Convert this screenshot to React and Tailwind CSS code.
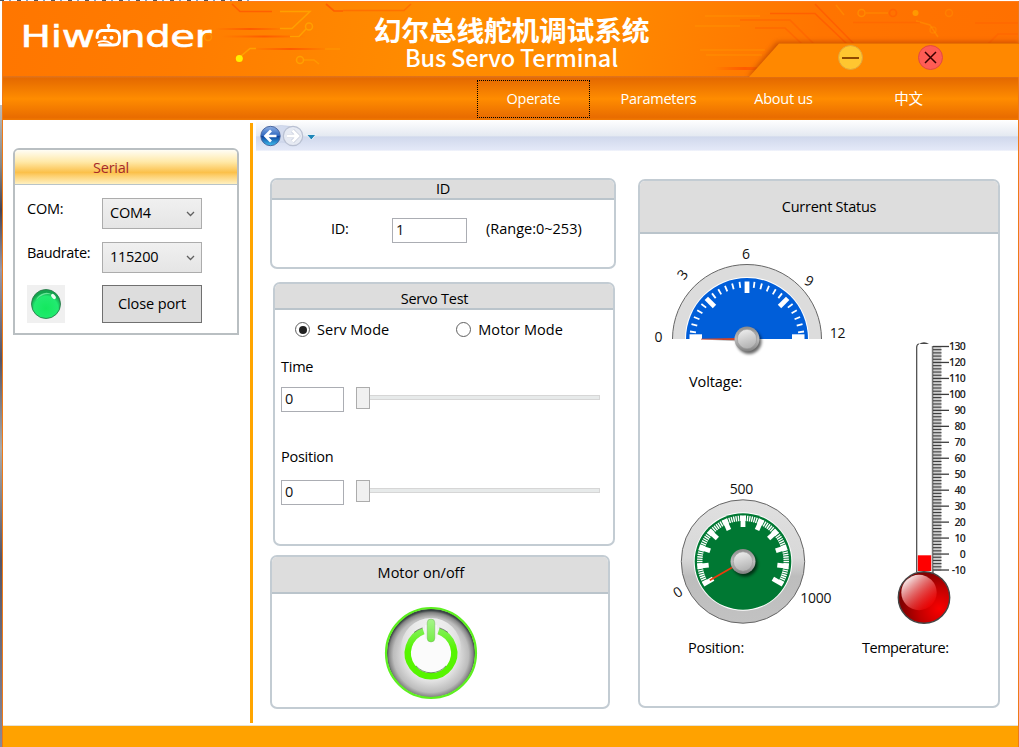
import React from "react";

const polar = (cx, cy, r, deg) => {
  const a = (deg * Math.PI) / 180;
  return [cx + r * Math.cos(a), cy - r * Math.sin(a)];
};

function Tick({ cx, cy, r1, r2, deg, w }) {
  const [x1, y1] = polar(cx, cy, r1, deg);
  const [x2, y2] = polar(cx, cy, r2, deg);
  return <line x1={x1} y1={y1} x2={x2} y2={y2} stroke="#fff" strokeWidth={w} />;
}

function Knob({ cx, cy }) {
  return (
    <g>
      <circle cx={cx + 2} cy={cy + 2.5} r="12.5" fill="#000" opacity="0.6" filter="url(#soft)" />
      <circle cx={cx} cy={cy} r="12.5" fill="url(#knobRim)" />
      <circle cx={cx} cy={cy} r="9.7" fill="url(#knobFace)" stroke="#999" strokeWidth="0.6" />
    </g>
  );
}

function Defs() {
  return (
    <defs>
      <filter id="soft" x="-50%" y="-50%" width="200%" height="200%">
        <feGaussianBlur stdDeviation="1.7" />
      </filter>
      <linearGradient id="knobRim" x1="0" y1="0" x2="0" y2="1">
        <stop offset="0" stopColor="#8a8a8a" />
        <stop offset="0.5" stopColor="#bdbdbd" />
        <stop offset="1" stopColor="#808080" />
      </linearGradient>
      <linearGradient id="knobFace" x1="0" y1="0" x2="0.3" y2="1">
        <stop offset="0" stopColor="#f2f2f2" />
        <stop offset="1" stopColor="#b5b5b5" />
      </linearGradient>
    </defs>
  );
}

function VoltageGauge() {
  const ticks = [];
  for (let i = 1; i < 24; i++) {
    const major = i % 6 === 0;
    ticks.push(<Tick key={i} cx={747} cy={339} r1={major ? 46 : 51.5} r2={57.5} deg={i * 7.5} w={major ? 4.8 : 1.8} />);
  }
  return (
    <svg className="block" width="210" height="120" viewBox="650 243 210 120">
      <Defs />
      <path d="M672.5 339A74.5 74.5 0 0 1 821.5 339Z" fill="#dcdcdc" />
      <path d="M672.5 339A74.5 74.5 0 0 1 821.5 339" fill="none" stroke="#666" strokeWidth="1" />
      <path d="M685 339A62 62 0 0 1 809 339Z" fill="#fff" />
      <path d="M686 339A61 61 0 0 1 808 339Z" fill="#005ed9" />
      {ticks}
      <rect x="689.5" y="334.3" width="12.5" height="4.7" fill="#fff" />
      <rect x="792" y="334.3" width="12.5" height="4.7" fill="#fff" />
      <path d="M701 338.8L736 338V340.2L701 339.4Z" fill="#cf4426" />
      <path d="M703 339.6L736 340.2V341.2Z" fill="#777" opacity="0.5" />
      <Knob cx={747} cy={339} />
      <g className="font-['Open_Sans',sans-serif] text-[14px]" fill="#111" textAnchor="middle">
        <text x="658.3" y="341.7">0</text>
        <text x="0" y="5" transform="translate(682.5 274.5) rotate(-52)">3</text>
        <text x="745.9" y="258.7">6</text>
        <text x="0" y="5" transform="translate(809 281) rotate(28)">9</text>
        <text x="837.6" y="337.7">12</text>
      </g>
    </svg>
  );
}

function PositionGauge() {
  const cx = 743;
  const cy = 561.5;
  const ticks = [];
  for (let i = 0; i <= 80; i++) {
    const major = i % 8 === 0;
    ticks.push(<Tick key={i} cx={cx} cy={cy} r1={major ? 34.5 : 40.5} r2={46} deg={210 - i * 3} w={major ? 4.8 : 1.4} />);
  }
  return (
    <svg className="block" width="180" height="152" viewBox="665 478 180 152">
      <defs>
        <linearGradient id="bezel" x1="0" y1="0" x2="0" y2="1">
          <stop offset="0" stopColor="#e0e0e0" />
          <stop offset="0.47" stopColor="#d8d8d8" />
          <stop offset="0.62" stopColor="#bdbdbd" />
          <stop offset="1" stopColor="#c2c2c2" />
        </linearGradient>
      </defs>
      <circle cx={cx} cy={cy} r="61.7" fill="url(#bezel)" stroke="#666" strokeWidth="1" />
      <circle cx={cx} cy={cy} r="49.3" fill="#fff" />
      <circle cx={cx} cy={cy} r="48.3" fill="#007833" />
      {ticks}
      <path d="M709.8 580.3L733 567" stroke="#ea3c0c" strokeWidth="1.7" />
      <Knob cx={cx} cy={561.5} />
      <g className="font-['Open_Sans',sans-serif] text-[14px]" fill="#111" textAnchor="middle">
        <text x="741.5" y="493.7">500</text>
        <text x="0" y="5" transform="translate(677.7 592.3) rotate(-32)">0</text>
        <text x="815.8" y="602.7">1000</text>
      </g>
    </svg>
  );
}

function Thermometer() {
  const marks = [];
  for (let i = 0; i <= 70; i++) {
    const major = i % 5 === 0;
    const y = 346.5 + i * 3.193;
    marks.push(
      <line key={i} x1="933" x2={major ? 949 : 941.5} y1={y} y2={y} stroke="#3c3c3c" strokeWidth={major ? 1.3 : 1.1} />
    );
    if (major) {
      marks.push(
        <text key={"t" + i} x="965" y={y + 3.7} textAnchor="end">
          {130 - i * 2}
        </text>
      );
    }
  }
  return (
    <svg className="block" width="90" height="290" viewBox="890 338 90 290">
      <defs>
        <radialGradient id="bulb" cx="0.8" cy="0.72" r="0.75">
          <stop offset="0" stopColor="#fa0000" />
          <stop offset="0.55" stopColor="#c00000" />
          <stop offset="1" stopColor="#800000" />
        </radialGradient>
        <linearGradient id="shine" x1="0.15" y1="0.1" x2="0.85" y2="0.9">
          <stop offset="0" stopColor="#fff" stopOpacity="0.95" />
          <stop offset="1" stopColor="#f00" stopOpacity="0.35" />
        </linearGradient>
      </defs>
      <path d="M919 344Q924 340.500 929 344Z" fill="#444" />
      <path d="M916.700 572V347Q917 344 919 344" fill="none" stroke="#444" strokeWidth="1.200" />
      <path d="M932.800 346V573" stroke="#777" strokeWidth="2" />
      <rect x="933" y="346" width="8.300" height="225" fill="#b8b8b8" opacity="0.700" />
      <rect x="917.800" y="555.300" width="13.400" height="15.700" fill="#f00" />
      <g className="font-['Open_Sans',sans-serif] text-[10.5px] font-semibold tracking-[-0.7px]" fill="#222">{marks}</g>
      <circle cx="924" cy="597.500" r="25.700" fill="url(#bulb)" stroke="#444" strokeWidth="1.400" />
      <circle cx="919" cy="592.500" r="17.700" fill="url(#shine)" />
    </svg>
  );
}

function PowerButton() {
  return (
    <svg className="block" width="94" height="94" viewBox="-47 -47 94 94">
      <defs>
        <radialGradient id="disc" cx="0.5" cy="0.52" r="0.5">
          <stop offset="0" stopColor="#fff" />
          <stop offset="0.58" stopColor="#e4e4e4" />
          <stop offset="0.85" stopColor="#bcbcbc" />
          <stop offset="0.95" stopColor="#858585" />
          <stop offset="1" stopColor="#3c4446" />
        </radialGradient>
        <linearGradient id="bar" x1="0" y1="0" x2="0" y2="1">
          <stop offset="0" stopColor="#a8f58c" />
          <stop offset="1" stopColor="#74ee45" />
        </linearGradient>
        <linearGradient id="dome" x1="0" y1="0" x2="0" y2="1">
          <stop offset="0" stopColor="#fff" stopOpacity="0.75" />
          <stop offset="0.6" stopColor="#fff" stopOpacity="0" />
        </linearGradient>
        <linearGradient id="ring" x1="0" y1="0" x2="0" y2="1">
          <stop offset="0" stopColor="#7cf04e" />
          <stop offset="0.4" stopColor="#56f500" />
        </linearGradient>
      </defs>
      <circle r="44.3" fill="url(#disc)" />
      <circle r="45" fill="none" stroke="#5df01f" strokeWidth="2.2" />
      <circle cy="-5" r="30" fill="url(#dome)" />
      <circle r="20.5" fill="#fbfbfb" />
      <path d="M7.500 -21.900A23.200 23.200 0 1 1 -7.500 -21.900" fill="none" stroke="url(#ring)" strokeWidth="6.400" />
      <path d="M-15 12.900A19.800 19.800 0 0 0 15 12.900" fill="none" stroke="#3f6c35" strokeWidth="0.700" />
      <path d="M8.500 -25.100A26.500 26.500 0 0 1 17 -20.500M-8.500 -25.100A26.500 26.500 0 0 0 -17 -20.500" fill="none" stroke="#444" strokeWidth="0.600" />
      <path d="M0 -28V-14.500" stroke="#f6f6f6" strokeWidth="12" />
      <rect x="-3.800" y="-34" width="7.600" height="23" rx="3.800" fill="url(#bar)" stroke="#67a650" strokeWidth="0.400" />
    </svg>
  );
}

function Logo() {
  return (
    <svg className="block" width="210" height="46" viewBox="13 13 210 46">
      <g fill="#fff" stroke="#fff" strokeWidth="0.6" className="font-['DejaVu_Sans',sans-serif] text-[31px]">
        <text x="20.500" y="46.700" textLength="74" lengthAdjust="spacingAndGlyphs">Hiw</text>
        <text x="120" y="46.700" textLength="91" lengthAdjust="spacingAndGlyphs">nder</text>
      </g>
      <g fill="none" stroke="#fff" strokeWidth="3" strokeLinecap="round">
        <path d="M102 30.500H113Q119.500 30.700 119.500 36.500V39Q119.500 45 113.500 45H99.500" />
        <path d="M102 30.500Q97 31 97 37.500" />
        <path d="M98 42.300Q105 39.500 111 43.500" strokeWidth="1.600" />
        <path d="M108.500 30V26" strokeWidth="1.800" />
      </g>
      <circle cx="108.500" cy="25.800" r="2" fill="#fff" />
      <circle cx="104.800" cy="37.800" r="2" fill="#fff" />
      <circle cx="111.500" cy="37.800" r="2" fill="#fff" />
    </svg>
  );
}

function BannerArt() {
  return (
    <svg className="absolute inset-0" width="1016" height="75" viewBox="3 1 1016 75">
      <defs>
        <filter id="blurTab" x="-20%" y="-20%" width="140%" height="140%">
          <feGaussianBlur stdDeviation="2.5" />
        </filter>
        <linearGradient id="fadeL" x1="0" x2="1" y1="0" y2="0">
          <stop offset="0" stopColor="#ff5a00" stopOpacity="0" />
          <stop offset="0.5" stopColor="#ff5a00" />
          <stop offset="1" stopColor="#ff5a00" stopOpacity="0" />
        </linearGradient>
      </defs>
      <g fill="url(#fadeL)">
        <rect x="215" y="27" width="70" height="2" />
        <rect x="222" y="34.500" width="84" height="2" />
        <rect x="252" y="47" width="76" height="2" />
        <rect x="715" y="66" width="60" height="3" />
      </g>
      <g fill="none" stroke="#ffa000" strokeWidth="1.500">
        <path d="M280 10.500H310L292 27.500H280M290 35.500H299L306 28M241 55L250 47.500H256" />
        <circle cx="309" cy="25.500" r="3.500" />
        <circle cx="208" cy="36" r="3.500" opacity="0.600" />
        <circle cx="300" cy="59" r="3.500" />
        <path d="M304 59H314L319 63" opacity="0.700" />
        <path d="M325 48H340" opacity="0.500" />
        <path d="M700 49H765M706 54H762M695 25H740M705 15H760" opacity="0.350" />
        <path d="M836 4L844 14M916 20L930 24L938 36" opacity="0.400" />
        <circle cx="861.500" cy="12" r="3.500" opacity="0.500" />
        <path d="M866 12H888" opacity="0.350" />
        <circle cx="949" cy="12" r="3.500" opacity="0.300" />
        <circle cx="933" cy="29" r="3" opacity="0.300" />
      </g>
      <g fill="none" stroke="#ff6000" strokeWidth="1.700">
        <path d="M232 3L240 10.500H272M326 3L334 10H343" />
        <path d="M343 9.500H404L411 3" opacity="0.600" />
        <path d="M770 12.500H815L847 43M815 3L854 43" />
        <path d="M740 19H790L814 43M755 27H785L802 43" opacity="0.600" />
        <path d="M853 21.500H920M975 22H1018M988 43L998 33H1018" opacity="0.500" />
        <circle cx="893" cy="12" r="3.500" opacity="0.700" />
      </g>
      <circle cx="239.300" cy="57.500" r="3.500" fill="#fff000" />
      <circle cx="915.500" cy="12" r="3" fill="#ff9800" />
      <path d="M748 76L777 41H1019V76Z" fill="#a03000" opacity="0.550" filter="url(#blurTab)" />
      <path d="M749 76L779 42.500H1019V76Z" fill="#ff8800" />
      <path d="M779 42.500H1019" stroke="#e87000" strokeWidth="1" />
    </svg>
  );
}

function Banner() {
  return (
    <header className="relative h-[75px] shrink-0 bg-[linear-gradient(100deg,#ff7600_0%,#ff7c00_18%,#ff8c00_42%,#ff8a00_58%,#ff7400_80%,#ff7000_100%)] border-t border-[#ff7a1a]">
      <BannerArt />
      <div className="relative flex h-full">
        <div className="w-[335px] pl-[10px] pt-[11px]">
          <Logo />
        </div>
        <div className="w-[347px] flex flex-col items-center text-white">
          <div className="pt-[11px] text-[27.800px] leading-[32px] font-bold whitespace-nowrap font-['Noto_Sans_CJK_SC',sans-serif]">
            幻尔总线舵机调试系统
          </div>
          <div className="text-[23.500px] leading-[25px] font-medium tracking-[-0.200px] whitespace-nowrap font-['Noto_Sans_CJK_SC',sans-serif]">
            Bus Servo Terminal
          </div>
        </div>
        <div className="flex pl-[153px] pt-[43px] gap-[55px]">
          <button className="w-[25px] h-[25px] rounded-full bg-[#ffc630] border border-[#e2a53a] flex items-center justify-center">
            <span className="w-[17px] h-[2px] bg-[#8e4a00]" />
          </button>
          <button className="w-[25px] h-[25px] rounded-full bg-[#ff5c55] border border-[#e24a40] flex items-center justify-center">
            <svg width="13" height="13" viewBox="0 0 13 13">
              <path d="M1 1L12 12M12 1L1 12" stroke="#3a0000" strokeWidth="1.500" />
            </svg>
          </button>
        </div>
      </div>
    </header>
  );
}

function Nav() {
  const items = ["Operate", "Parameters", "About us", "中文"];
  return (
    <nav className="h-[44px] pt-px shrink-0 pl-[468px] grid grid-cols-[125px_125px_125px_125px] items-center text-white text-[14.500px] tracking-[-0.25px] bg-[linear-gradient(#e07420_0%,#e56a00_6%,#ff8c00_52%,#e96c00_94%,#f07800_100%)]">
      {items.map((t, i) => (
        <div
          key={t}
          className={
            "w-[113px] h-[38px] mx-auto flex items-center justify-center pt-[1px] whitespace-nowrap " +
            (i === 0 ? "border border-dotted border-black" : "")
          }
        >
          {t}
        </div>
      ))}
    </nav>
  );
}

function Select({ value }) {
  return (
    <div className="w-[100px] h-[31px] flex items-center justify-between pl-[7px] pr-[6px] border border-[#acacac] bg-[linear-gradient(#f0f0f0,#e5e5e5)]">
      <span className="-mt-[2px]">{value}</span>
      <svg width="9" height="6" viewBox="0 0 9 6">
        <path d="M1 1L4.500 4.500L8 1" fill="none" stroke="#606060" strokeWidth="1.300" />
      </svg>
    </div>
  );
}

function Sidebar() {
  return (
    <aside className="w-[247px] shrink-0 pl-[10px] pt-[28px]">
      <section className="w-[226px] h-[187px] border-2 border-[#b9bfc2] rounded-t-[6px] overflow-hidden">
        <h2 className="h-[35px] pr-[30px] text-center leading-[35px] text-[#a52a2a] border-b border-[#b9c4c8] bg-[linear-gradient(#fffdf5_0%,#ffe9a8_35%,#fbc04a_66%,#fdd070_76%,#fff0c0_100%)]">
          Serial
        </h2>
        <div className="pl-[12px] pt-[13px] grid grid-cols-[75px_100px] gap-y-[13px]">
          <label className="leading-[22px]">COM:</label>
          <Select value="COM4" />
          <label className="leading-[22px] tracking-[-0.35px] whitespace-nowrap">Baudrate:</label>
          <Select value="115200" />
          <div className="-mt-px w-[38px] h-[38px] bg-[#f0f0f0] flex items-center justify-center">
            <svg width="32" height="32" viewBox="0 0 32 32">
              <defs>
                <radialGradient id="led" cx="0.5" cy="0.65" r="0.55">
                  <stop offset="0" stopColor="#14e85e" />
                  <stop offset="0.75" stopColor="#22ea70" />
                  <stop offset="1" stopColor="#12a34c" />
                </radialGradient>
              </defs>
              <circle cx="16" cy="16" r="14.500" fill="url(#led)" stroke="#2b7a4c" strokeWidth="0.900" />
              <path d="M6 12A11.500 11.500 0 0 1 24 7.500Q18 5 13 7T6 12Z" fill="#8af5b4" opacity="0.700" />
              <ellipse cx="23.500" cy="8.500" rx="1.800" ry="3" transform="rotate(-38 23.500 8.500)" fill="#eafff2" />
            </svg>
          </div>
          <button className="-mt-px w-[100px] h-[38px] pb-px tracking-[-0.100px] border border-[#707070] bg-[#dddddd]">Close port</button>
        </div>
      </section>
    </aside>
  );
}

function Toolbar() {
  return (
    <div className="ml-[3px] h-[31px] flex items-center pl-[4px] pb-px bg-[linear-gradient(#ffffff_0%,#e4e9f1_52%,#d0d8ec_54%,#e4e9f8_97%,#fafbfe_100%)]">
      <svg width="60" height="26" viewBox="0 0 60 26">
        <defs>
          <linearGradient id="back" x1="0" y1="0" x2="0" y2="1">
            <stop offset="0" stopColor="#8fb0e4" />
            <stop offset="0.48" stopColor="#2f68c0" />
            <stop offset="0.52" stopColor="#0e439e" />
            <stop offset="1" stopColor="#3fc0f0" />
          </linearGradient>
        </defs>
        <path d="M8 5Q21 2 35 5V22Q22 18 8 22Z" fill="#d3dbee" stroke="#c0cae0" strokeWidth="0.600" />
        <circle cx="10.500" cy="14" r="9.700" fill="url(#back)" stroke="#3e5d98" strokeWidth="0.900" />
        <circle cx="33" cy="14" r="9.700" fill="#e6eaf3" stroke="#b9c0d2" strokeWidth="1.200" />
        <path d="M16.500 14H6M11 8.500L5.500 14L11 19.500" fill="none" stroke="#fff" strokeWidth="2.700" />
        <path d="M27 14H37.500M32.500 8.500L38 14L32.500 19.500" fill="none" stroke="#c3c9d8" strokeWidth="4" />
        <path d="M27 14H37.500M32.500 8.500L38 14L32.500 19.500" fill="none" stroke="#fff" strokeWidth="2.800" />
        <path d="M46.500 12.500H56L51.300 18Z" fill="#1e86b8" stroke="#fff" strokeWidth="0.800" />
      </svg>
    </div>
  );
}

function Card({ title, className, headClass, children }) {
  return (
    <section className={"border-2 border-[#c3ccd3] rounded-[7px] overflow-hidden bg-white " + className}>
      <h2 className={"bg-[#dddddd] border-b-2 border-[#bac4cb] flex items-center justify-center " + headClass}>{title}</h2>
      {children}
    </section>
  );
}

function Field({ value, className }) {
  return (
    <div className={"h-[25px] border border-[#abadb3] bg-white pl-[3px] leading-[22px] text-[#111] " + className}>{value}</div>
  );
}

function Radio({ label, checked }) {
  return (
    <label className="flex items-center gap-[7px] whitespace-nowrap tracking-[0.050px]">
      <span className="w-[15px] h-[15px] rounded-full border border-[#606060] bg-white flex items-center justify-center">
        {checked && <span className="w-[8px] h-[8px] rounded-full bg-[#212121]" />}
      </span>
      {label}
    </label>
  );
}

function SliderRow({ label, className }) {
  return (
    <div>
      <div className="h-[20px] leading-[20px]">{label}</div>
      <div className={"flex items-start " + className}>
        <Field value="0" className="w-[63px]" />
        <div className="ml-[12px] w-[244px] h-[22px] flex items-center">
          <span className="w-[14px] h-[22px] shrink-0 border border-[#acacac] bg-[#f0f0f0]" />
          <span className="grow h-[5px] border border-l-0 border-[#d6d6d6] bg-[#e7eaea]" />
        </div>
      </div>
    </div>
  );
}

export default function App() {
  return (
    <div className="w-[1019px] h-[747px] overflow-hidden bg-white text-black text-[14.500px] tracking-[-0.25px] font-['Open_Sans','Noto_Sans_CJK_SC',sans-serif] flex flex-col">
      <div className="h-px shrink-0 w-[249px] bg-[repeating-linear-gradient(90deg,#555_0_4px,#fff_4px_9px,#7ea0c0_9px_11px,#fff_11px_17px)]" />
      <div className="flex grow min-h-0">
        <div className="w-[2px] shrink-0 bg-[linear-gradient(#fff_0%,#fff_14%,#bbb_14%,#888_22%,#445_28%,#99a_36%,#556_48%,#aaa_60%,#556_75%,#889_100%)]" />
        <div className="w-[1017px] flex flex-col border-l border-r border-[#ee7a18]">
          <Banner />
          <Nav />
          <div className="h-[606px] shrink-0 flex border-b border-[#e6e2d4]">
            <Sidebar />
            <div className="w-[3px] h-[600px] mt-[3px] shrink-0 bg-[#ffa500]" />
            <main className="grow">
              <Toolbar />
              <div className="flex pl-[17px]">
                <div className="w-[368px]">
                  <Card title="ID" className="mt-[27px] w-[346px] h-[91px]" headClass="h-[20px]">
                    <div className="flex items-center pl-[59px] pt-[18px]">
                      <span className="w-[61px] -mt-[4px]">ID:</span>
                      <Field value="1" className="w-[75px]" />
                      <span className="ml-[19px] -mt-[4px] tracking-[0px]">(Range:0~253)</span>
                    </div>
                  </Card>
                  <Card title="Servo Test" className="mt-[13px] ml-[3px] w-[342px] h-[264px]" headClass="h-[26px] pt-[5px] pr-[19px]">
                    <div className="flex pl-[20px] pt-[9px] gap-[67px]">
                      <Radio label="Serv Mode" checked />
                      <Radio label="Motor Mode" />
                    </div>
                    <div className="pl-[6px] pt-[16px] flex flex-col gap-[35px]">
                      <SliderRow label="Time" className="pt-[10px]" />
                      <SliderRow label="Position" className="pt-[13px]" />
                    </div>
                  </Card>
                  <Card title="Motor on/off" className="mt-[9px] w-[340px] h-[154px]" headClass="h-[37px] pr-[38px] pb-[4px] tracking-[0px]">
                    <div className="pl-[112px] pt-[12px]">
                      <PowerButton />
                    </div>
                  </Card>
                </div>
                <Card title="Current Status" className="mt-[28px] w-[362px] h-[529px]" headClass="h-[53px] pl-[20px]">
                  <div className="flex">
                    <div className="w-[222px] pt-[9px] pl-[10px]">
                      <VoltageGauge />
                      <div className="pl-[39px] pt-[8px] h-[115px] tracking-[-0.100px]">Voltage:</div>
                      <div className="pl-[15px]">
                        <PositionGauge />
                      </div>
                      <div className="pl-[38px] pt-[7px]">Position:</div>
                    </div>
                    <div className="pt-[104px]">
                      <div className="pl-[28px]">
                        <Thermometer />
                      </div>
                      <div className="pt-[9px] tracking-[-0.500px]">Temperature:</div>
                    </div>
                  </div>
                </Card>
              </div>
            </main>
          </div>
          <footer className="grow bg-[#ffa200]" />
        </div>
      </div>
    </div>
  );
}
